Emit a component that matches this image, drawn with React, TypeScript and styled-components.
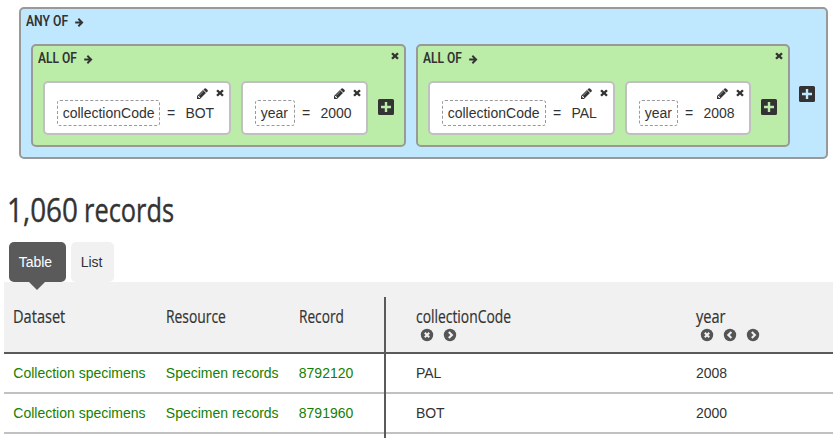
import React from "react";
import styled, { createGlobalStyle } from "styled-components";

const GlobalStyle = createGlobalStyle`
  * { box-sizing: border-box; }
  body {
    margin: 0;
    background: #fff;
    color: #333;
    font: 14px/20px "Liberation Sans", Arial, sans-serif;
    overflow: hidden;
  }
`;

const Page = styled.main`
  width: 833px;
  height: 438px;
  overflow: hidden;
  padding-top: 7px;
`;

const Narrow = styled.span<{ $size: number; $scale: number; $weight?: number; $family?: string; $stroke?: number }>`
  display: block;
  white-space: nowrap;
  font-family: ${(p) => p.$family || '"Open Sans"'}, sans-serif;
  font-size: ${(p) => p.$size}px;
  font-weight: ${(p) => p.$weight || 400};
  -webkit-text-stroke: ${(p) => p.$stroke || 0}px currentColor;
  transform: scaleX(${(p) => p.$scale});
  transform-origin: 0 0;
`;

/* ---------- icons ---------- */

const Svg = styled.svg`
  display: block;
  flex: none;
  fill: #333;
`;

const Cross = () => (
  <Svg width="8" height="8" viewBox="0 0 8 8">
    <path d="M1.9 0.4 4 2.5 6.1 0.4 7.8 1.9 5.7 4 7.8 6.1 6.1 7.6 4 5.5 1.9 7.6 0.2 6.1 2.3 4 0.2 1.9Z" />
  </Svg>
);

const Pencil = () => (
  <Svg width="11" height="11" viewBox="128 128 1536 1536">
    <path d="M491 1536l91-91-235-235-91 91v107h128v128h107zm523-928q0-22-22-22-10 0-17 7l-542 542q-7 7-7 17 0 22 22 22 10 0 17-7l542-542q7-7 7-17zm-54-192l416 416-832 832h-416v-416zm683 96q0 53-37 90l-166 166-416-416 166-165q36-38 90-38 53 0 91 38l235 234q37 39 37 91z" />
  </Svg>
);

const Arrow = () => (
  <Svg width="9" height="9" viewBox="0 0 9 9">
    <path d="M4 0.1 8.5 4.5 4 8.9 2.7 7.6 4.7 5.5H0.2V3.5H4.7L2.7 1.4Z" />
  </Svg>
);

const Plus = () => (
  <Svg width="16" height="16" viewBox="0 0 16 16">
    <path
      fillRule="evenodd"
      d="M1.5 0H14.5Q16 0 16 1.5V14.5Q16 16 14.5 16H1.5Q0 16 0 14.5V1.5Q0 0 1.5 0ZM6.8 3V6.8H3V9.2H6.8V13H9.2V9.2H13V6.8H9.2V3Z"
    />
  </Svg>
);

const Disc = styled(Svg)`
  overflow: visible;
  fill: #555;
  path {
    fill: none;
    stroke: #f1f1f1;
    stroke-width: 2.1;
  }
`;

const glyphs = {
  remove: "M3.8 3.8 8.2 8.2M8.2 3.8 3.8 8.2",
  left: "M7.4 2.9 4.3 6 7.4 9.1",
  right: "M4.8 2.9 7.9 6 4.8 9.1",
};

type Action = keyof typeof glyphs;

const ActionIcon = ({ kind }: { kind: Action }) => (
  <Disc width="12" height="12" viewBox="0 0 12 12">
    <circle cx="6" cy="6" r="6.2" />
    <path d={glyphs[kind]} />
  </Disc>
);

/* ---------- query builder ---------- */

const AnyGroup = styled.section`
  width: 809px;
  height: 152px;
  margin-left: 19px;
  border: 2px solid #999;
  border-radius: 5px;
  background: #bfe8ff;
`;

const AllGroup = styled.section<{ $width: number }>`
  width: ${(p) => p.$width}px;
  height: 103px;
  border: 2px solid #999;
  border-radius: 5px;
  background: #bbeda8;
`;

const GroupTitle = styled.header<{ $inner?: boolean }>`
  display: flex;
  height: 35px;
  padding: ${(p) => (p.$inner ? "3px 5px 0 4.7px" : "3px 5px 0 5px")};
  line-height: 18px;

  > svg { margin-top: 6px; }
  > svg:last-child:not(:nth-child(2)) { margin: 3.3px 0 0 auto; }
`;

const TitleText = styled.div<{ $width: number }>`
  width: ${(p) => p.$width}px;
`;

const Groups = styled.div`
  display: flex;
  gap: 10px;
  padding-left: 10px;

  > svg { margin: 42px 0 0 -0.6px; }
`;

const Conditions = styled.div`
  display: flex;
  gap: 10px;
  padding-left: 10px;

  > svg { margin-top: 18px; }
`;

const ConditionBox = styled.div<{ $width: number }>`
  width: ${(p) => p.$width}px;
  height: 54px;
  border: 2px solid #c1bfc1;
  border-radius: 5px;
  background: #fff;
`;

const Tools = styled.div`
  display: flex;
  justify-content: flex-end;
  align-items: center;
  gap: 8px;
  height: 17px;
  padding: 3px 4.6px 0 0;
`;

const Expression = styled.div`
  display: flex;
  align-items: center;
  height: 26px;
  padding-left: 12px;
`;

const Field = styled.span<{ $width: number }>`
  width: ${(p) => p.$width}px;
  height: 26px;
  line-height: 24px;
  border: 1px dashed #999;
  border-radius: 3px;
  padding-left: 4.7px;
`;

const Operator = styled.span`
  width: 25.4px;
  padding-left: 7px;
`;

type Condition = { field: string; value: string; width: number; fieldWidth: number };

const groups: { width: number; conditions: Condition[] }[] = [
  {
    width: 375,
    conditions: [
      { field: "collectionCode", value: "BOT", width: 188, fieldWidth: 103 },
      { field: "year", value: "2000", width: 127, fieldWidth: 40 },
    ],
  },
  {
    width: 374,
    conditions: [
      { field: "collectionCode", value: "PAL", width: 187, fieldWidth: 104 },
      { field: "year", value: "2008", width: 126, fieldWidth: 39 },
    ],
  },
];

/* ---------- results ---------- */

const ResultTitle = styled.h1`
  display: flex;
  height: 83px;
  margin: 0;
  padding: 30.5px 0 0 7px;
  line-height: 40px;
`;

const Count = styled.div`
  width: 77px;
`;

const Tabs = styled.nav`
  display: flex;
  gap: 5px;
  padding-left: 9px;
`;

const Tab = styled.div<{ $active?: boolean; $width: number }>`
  position: relative;
  width: ${(p) => p.$width}px;
  height: 40px;
  line-height: 40px;
  padding-left: 9.7px;
  border-radius: 5px;
  background: ${(p) => (p.$active ? "#5a5a5a" : "#f1f1f1")};
  color: ${(p) => (p.$active ? "#fff" : "#333")};

  &::after {
    content: "";
    display: ${(p) => (p.$active ? "block" : "none")};
    position: absolute;
    left: 20px;
    top: 40px;
    border: 8px solid transparent;
    border-top-color: #5a5a5a;
    border-bottom: 0;
  }
`;

const Table = styled.div`
  margin-left: 4px;
`;

const Row = styled.div<{ $head?: boolean }>`
  display: grid;
  grid-template-columns: 152.5px 133px 96.5px 280px 167px;
  height: ${(p) => (p.$head ? 72 : 40)}px;
  padding-top: ${(p) => (p.$head ? 15 : 0)}px;
  background: ${(p) => (p.$head ? "#f1f1f1" : "#fff")};
  border-bottom: 2px solid ${(p) => (p.$head ? "#5a5a5a" : "#c1c1c1")};
`;

const Cell = styled.div<{ $divider?: boolean; $link?: boolean; $data?: boolean }>`
  padding-left: ${(p) => (p.$data ? 29.9 : 9.3)}px;
  line-height: 38px;
  color: ${(p) => (p.$link ? "#168000" : "#333")};
  ${(p) => p.$divider && "width: 96.5px; margin-bottom: -2px; border-right: 2px solid #5a5a5a; position: relative;"}
`;

const Actions = styled.div`
  display: flex;
  gap: 10.7px;
  padding: 1px 0 0 5.4px;
`;

const HeadCell = styled(Cell)`
  line-height: 24px;
  padding-top: 7px;
`;

const columns: { label: string; scale: number; actions?: Action[] }[] = [
  { label: "Dataset", scale: 0.81 },
  { label: "Resource", scale: 0.77 },
  { label: "Record", scale: 0.76 },
  { label: "collectionCode", scale: 0.77, actions: ["remove", "right"] },
  { label: "year", scale: 0.81, actions: ["remove", "left", "right"] },
];

const records = [
  ["Collection specimens", "Specimen records", "8792120", "PAL", "2008"],
  ["Collection specimens", "Specimen records", "8791960", "BOT", "2000"],
  ["", "", "", "", ""],
];

export default function App() {
  return (
    <>
      <GlobalStyle />
      <Page>
        <AnyGroup>
          <GroupTitle>
            <TitleText $width={49}>
              <Narrow $family="Roboto" $size={15.5} $weight={600} $scale={0.785}>ANY OF</Narrow>
            </TitleText>
            <Arrow />
          </GroupTitle>
          <Groups>
            {groups.map((group, i) => (
              <AllGroup key={i} $width={group.width}>
                <GroupTitle $inner>
                  <TitleText $width={46.3}>
                    <Narrow $family="Roboto" $size={15.5} $weight={600} $scale={0.775}>ALL OF</Narrow>
                  </TitleText>
                  <Arrow />
                  <Cross />
                </GroupTitle>
                <Conditions>
                  {group.conditions.map((c) => (
                    <ConditionBox key={c.field} $width={c.width}>
                      <Tools>
                        <Pencil />
                        <Cross />
                      </Tools>
                      <Expression>
                        <Field $width={c.fieldWidth}>{c.field}</Field>
                        <Operator>=</Operator>
                        <span>{c.value}</span>
                      </Expression>
                    </ConditionBox>
                  ))}
                  <Plus />
                </Conditions>
              </AllGroup>
            ))}
            <Plus />
          </Groups>
        </AnyGroup>

        <ResultTitle>
          <Count>
            <Narrow $size={33} $scale={0.845} $stroke={0.4}>1,060</Narrow>
          </Count>
          <Narrow $size={33} $scale={0.77} $stroke={0.4}>records</Narrow>
        </ResultTitle>
        <Tabs>
          <Tab $active $width={57}>Table</Tab>
          <Tab $width={43}>List</Tab>
        </Tabs>
        <Table>
          <Row $head>
            {columns.map((col, i) => (
              <HeadCell key={col.label} $divider={i === 2} $data={i > 2}>
                <Narrow $size={18} $scale={col.scale} $stroke={0.2}>{col.label}</Narrow>
                {col.actions && (
                  <Actions>
                    {col.actions.map((kind) => (
                      <ActionIcon key={kind} kind={kind} />
                    ))}
                  </Actions>
                )}
              </HeadCell>
            ))}
          </Row>
          {records.map((record, r) => (
            <Row key={r}>
              {record.map((value, i) => (
                <Cell key={i} $divider={i === 2} $link={i < 3} $data={i > 2}>{value}</Cell>
              ))}
            </Row>
          ))}
        </Table>
      </Page>
    </>
  );
}
